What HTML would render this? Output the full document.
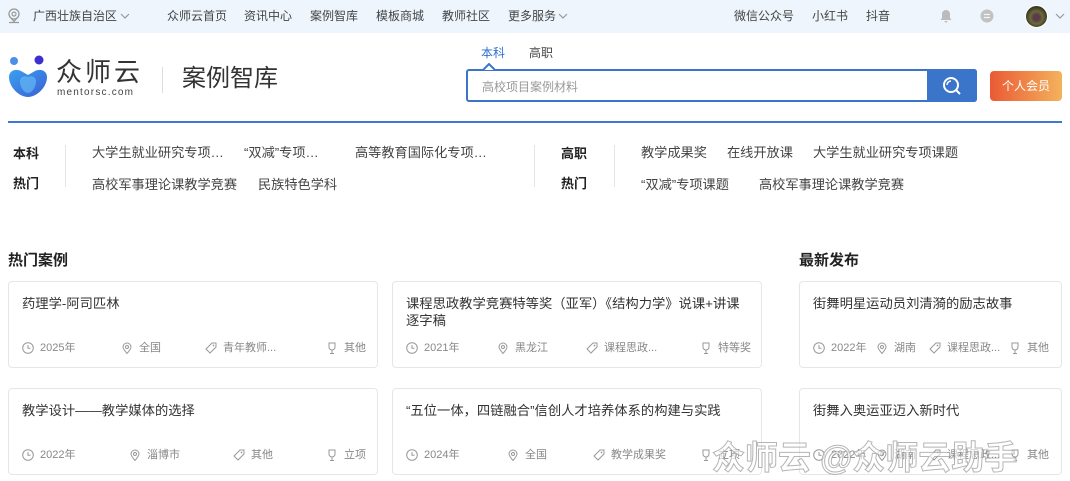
<!DOCTYPE html>
<html><head><meta charset="utf-8"><style>
*{margin:0;padding:0;box-sizing:border-box}
body{width:1070px;height:481px;overflow:hidden;background:#fff;font-family:"Liberation Sans","Noto Sans CJK SC",sans-serif;color:#333;position:relative}
.a{position:absolute;white-space:nowrap}
.top{position:absolute;left:0;top:0;width:1070px;height:33px;background:#eef5fd}
.top .a{font-size:12px;color:#444;top:9px;line-height:15px}
.card{position:absolute;border:1px solid #e6e6e6;border-radius:4px;background:#fff}
.card .t{position:absolute;left:13px;top:13px;font-size:13.3px;color:#333;line-height:17px}
.card .m{position:absolute;top:59px;font-size:11px;color:#888;line-height:14px;display:flex;align-items:center;gap:6px}
.card .m svg{width:12px;height:12px}
.hl{font-size:13.2px;color:#444}
</style></head><body>
<div class="top">
<svg class="a" style="left:7px;top:8px" width="14" height="17" viewBox="0 0 14 17"><circle cx="7" cy="6" r="5" fill="none" stroke="#999" stroke-width="1.3"/><circle cx="7" cy="6" r="2" fill="none" stroke="#999" stroke-width="1.2"/><path d="M2 14.5h10" stroke="#999" stroke-width="1.3"/><path d="M4 10l3 3.5 3-3.5" fill="none" stroke="#999" stroke-width="1.3"/></svg>
<div class="a" style="left:33px">广西壮族自治区</div>
<svg class="a" style="left:120px;top:13px" width="10" height="7"><path d="M1 1l4 4 4-4" fill="none" stroke="#999" stroke-width="1.2"/></svg>
<div class="a" style="left:167px">众师云首页</div>
<div class="a" style="left:244px">资讯中心</div>
<div class="a" style="left:310px">案例智库</div>
<div class="a" style="left:376px">模板商城</div>
<div class="a" style="left:442px">教师社区</div>
<div class="a" style="left:508px">更多服务</div>
<svg class="a" style="left:558px;top:13px" width="10" height="7"><path d="M1 1l4 4 4-4" fill="none" stroke="#999" stroke-width="1.2"/></svg>
<div class="a" style="left:734px">微信公众号</div>
<div class="a" style="left:812px">小红书</div>
<div class="a" style="left:866px">抖音</div>
<svg class="a" style="left:940px;top:9px" width="12" height="14"><path d="M6 1a4 4 0 0 0-4 4v4l-1.5 2h11L10 9V5a4 4 0 0 0-4-4zM4.5 12h3a1.5 1.5 0 0 1-3 0z" fill="#bbb"/></svg>
<svg class="a" style="left:980px;top:9px" width="14" height="14"><circle cx="7" cy="7" r="6.5" fill="#c2c2c2"/><path d="M4 5.5h6M4 8.5h6" stroke="#eef5fd" stroke-width="1.2"/></svg>
<div class="a" style="left:1025px;top:5px;width:23px;height:23px;border-radius:50%;background:radial-gradient(circle at 50% 55%,#5a3b4a 0 20%,#6b6a3a 40%,#2c2c1c 75%);border:1.5px solid #fff"></div>
<svg class="a" style="left:1055px;top:13px" width="10" height="7"><path d="M1 1l4 4 4-4" fill="none" stroke="#999" stroke-width="1.2"/></svg>
</div>
<svg class="a" style="left:7px;top:55px" width="42" height="44" viewBox="0 0 42 44"><defs><linearGradient id="g" x1="0" y1="0" x2="1" y2="1"><stop offset="0" stop-color="#3aa0ee"/><stop offset="1" stop-color="#3b5fd6"/></linearGradient></defs><circle cx="7" cy="6" r="4" fill="#4a90e8"/><circle cx="32" cy="5" r="4.5" fill="#3b2fcf"/><path d="M2 22c0-6 6-9 12-6l7 4 7-4c6-3 12 0 12 6 0 10-10 20-19 20S2 32 2 22z" fill="url(#g)"/><path d="M13 26c0-4 4-6 8-4 4-2 8 0 8 4 0 6-4 12-8 12s-8-6-8-12z" fill="#64b8f4" opacity=".7"/></svg>
<div class="a" style="left:56px;top:56px;font-size:26px;letter-spacing:3px;color:#333;line-height:32px">众师云</div>
<div class="a" style="left:57px;top:87px;font-size:10px;letter-spacing:1.2px;color:#444;line-height:11px">mentorsc.com</div>
<div class="a" style="left:162px;top:67px;width:1px;height:26px;background:#ddd"></div>
<div class="a" style="left:182px;top:64px;font-size:24px;color:#333;line-height:30px">案例智库</div>
<div class="a" style="left:481px;top:44px;font-size:12px;color:#2f6fd0">本科</div>
<div class="a" style="left:529px;top:44px;font-size:12px;color:#444">高职</div>
<div class="a" style="left:466px;top:69px;width:511px;height:33px;border:2px solid #3a75c9;border-radius:3px"></div>
<svg class="a" style="left:483px;top:63px" width="12" height="8"><path d="M0 7l6-6 6 6" fill="#fff" stroke="#3a75c9" stroke-width="2"/></svg>
<div class="a" style="left:482px;top:78px;font-size:12px;color:#999">高校项目案例材料</div>
<div class="a" style="left:927px;top:69px;width:50px;height:33px;background:#3a75c9;border-radius:0 3px 3px 0"></div>
<svg class="a" style="left:942px;top:76px" width="20" height="20"><circle cx="9" cy="9" r="7" fill="none" stroke="#fff" stroke-width="2"/><path d="M14 14l4 4" stroke="#fff" stroke-width="2"/><path d="M5 9a4 4 0 0 1 4-4" fill="none" stroke="#fff" stroke-width="1.5"/></svg>
<div class="a" style="left:990px;top:71px;width:72px;height:30px;border-radius:4px;background:linear-gradient(90deg,#ea5a35,#f3b25c);color:#fff;font-size:12px;text-align:center;line-height:30px">个人会员</div>
<div class="a" style="left:8px;top:121px;width:1054px;height:2px;background:#3f78d0"></div>
<div class="a" style="left:13px;top:143px;font-size:13px;font-weight:bold;color:#222">本科</div>
<div class="a" style="left:13px;top:173px;font-size:13px;font-weight:bold;color:#222">热门</div>
<div class="a" style="left:65px;top:145px;width:1px;height:42px;background:#e5e5e5"></div>
<div class="a hl" style="left:92px;top:142px">大学生就业研究专项…</div>
<div class="a hl" style="left:244px;top:142px">“双减”专项…</div>
<div class="a hl" style="left:355px;top:142px">高等教育国际化专项…</div>
<div class="a hl" style="left:92px;top:174px">高校军事理论课教学竞赛</div>
<div class="a hl" style="left:258px;top:174px">民族特色学科</div>
<div class="a" style="left:534px;top:145px;width:1px;height:42px;background:#e5e5e5"></div>
<div class="a" style="left:561px;top:143px;font-size:13px;font-weight:bold;color:#222">高职</div>
<div class="a" style="left:561px;top:173px;font-size:13px;font-weight:bold;color:#222">热门</div>
<div class="a" style="left:614px;top:145px;width:1px;height:42px;background:#e5e5e5"></div>
<div class="a hl" style="left:641px;top:142px">教学成果奖</div>
<div class="a hl" style="left:727px;top:142px">在线开放课</div>
<div class="a hl" style="left:813px;top:142px">大学生就业研究专项课题</div>
<div class="a hl" style="left:641px;top:174px">“双减”专项课题</div>
<div class="a hl" style="left:759px;top:174px">高校军事理论课教学竞赛</div>
<div class="a" style="left:8px;top:249px;font-size:15px;font-weight:bold;color:#222">热门案例</div>
<div class="a" style="left:799px;top:249px;font-size:15px;font-weight:bold;color:#222">最新发布</div>

<svg width="0" height="0" style="position:absolute"><defs>
<g id="ck"><circle cx="6" cy="6" r="5.3" fill="none" stroke="#999" stroke-width="1"/><path d="M6 3v3.3h2.5" fill="none" stroke="#999"/></g>
<g id="pn"><path d="M6 11.5C3 8 2 6.5 2 5a4 4 0 0 1 8 0c0 1.5-1 3-4 6.5z" fill="none" stroke="#999"/><circle cx="6" cy="5" r="1.5" fill="none" stroke="#999"/></g>
<g id="tg"><path d="M1 7l6-6h4v4l-6 6z" fill="none" stroke="#999"/><circle cx="8.5" cy="3.5" r=".9" fill="#999"/></g>
<g id="cp"><path d="M3 1h6v4a3 3 0 0 1-6 0zM6 8v3M4 11.5h4" fill="none" stroke="#999"/></g>
</defs></svg>

<div class="card" style="left:8px;top:281px;width:370px;height:87px"><div class="t">药理学-阿司匹林</div>
<div class="m" style="left:13px"><svg><use href="#ck"/></svg>2025年</div><div class="m" style="left:112px"><svg><use href="#pn"/></svg>全国</div><div class="m" style="left:196px"><svg><use href="#tg"/></svg>青年教师...</div><div class="m" style="left:317px"><svg><use href="#cp"/></svg>其他</div></div>
<div class="card" style="left:392px;top:281px;width:370px;height:87px"><div class="t" style="width:340px;white-space:normal">课程思政教学竞赛特等奖（亚军）《结构力学》说课+讲课逐字稿</div>
<div class="m" style="left:13px"><svg><use href="#ck"/></svg>2021年</div><div class="m" style="left:104px"><svg><use href="#pn"/></svg>黑龙江</div><div class="m" style="left:193px"><svg><use href="#tg"/></svg>课程思政...</div><div class="m" style="left:307px"><svg><use href="#cp"/></svg>特等奖</div></div>
<div class="card" style="left:799px;top:281px;width:263px;height:87px"><div class="t">街舞明星运动员刘清漪的励志故事</div>
<div class="m" style="left:13px"><svg><use href="#ck"/></svg>2022年</div><div class="m" style="left:76px"><svg><use href="#pn"/></svg>湖南</div><div class="m" style="left:129px"><svg><use href="#tg"/></svg>课程思政...</div><div class="m" style="left:209px"><svg><use href="#cp"/></svg>其他</div></div>

<div class="card" style="left:8px;top:388px;width:370px;height:87px"><div class="t">教学设计——教学媒体的选择</div>
<div class="m" style="left:13px"><svg><use href="#ck"/></svg>2022年</div><div class="m" style="left:120px"><svg><use href="#pn"/></svg>淄博市</div><div class="m" style="left:224px"><svg><use href="#tg"/></svg>其他</div><div class="m" style="left:317px"><svg><use href="#cp"/></svg>立项</div></div>
<div class="card" style="left:392px;top:388px;width:370px;height:87px"><div class="t">“五位一体，四链融合”信创人才培养体系的构建与实践</div>
<div class="m" style="left:13px"><svg><use href="#ck"/></svg>2024年</div><div class="m" style="left:114px"><svg><use href="#pn"/></svg>全国</div><div class="m" style="left:200px"><svg><use href="#tg"/></svg>教学成果奖</div><div class="m" style="left:307px"><svg><use href="#cp"/></svg>立项</div></div>
<div class="card" style="left:799px;top:388px;width:263px;height:87px"><div class="t">街舞入奥运亚迈入新时代</div>
<div class="m" style="left:13px"><svg><use href="#ck"/></svg>2022年</div><div class="m" style="left:76px"><svg><use href="#pn"/></svg>湖南</div><div class="m" style="left:129px"><svg><use href="#tg"/></svg>课程思政...</div><div class="m" style="left:209px"><svg><use href="#cp"/></svg>其他</div></div>

<div class="a" style="left:712px;top:438px;font-size:33px;line-height:40px;color:rgba(255,255,255,.6);-webkit-text-stroke:1px rgba(150,150,150,.7);font-weight:bold;letter-spacing:0px">众师云 @众师云助手</div>
</body></html>
